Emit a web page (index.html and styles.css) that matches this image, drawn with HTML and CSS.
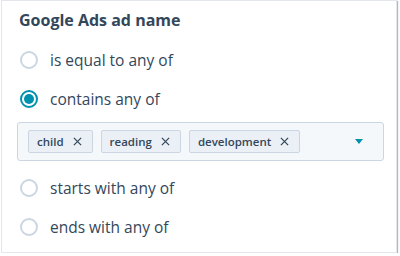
FILE: index.html
```html
<!DOCTYPE html>
<html lang="en">
<head>
  <meta charset="UTF-8" />
  <title>Google Ads ad name</title>
  <link rel="stylesheet" href="styles.css">
</head>
<body>
  <div class="card">
    <h2 class="title">Google Ads ad name</h2>

    <label class="option">
      <span class="radio"></span>
      <span class="label">is equal to any of</span>
    </label>

    <label class="option">
      <span class="radio checked"></span>
      <span class="label">contains any of</span>
    </label>

    <!-- 선택된 값 태그 -->
    <div class="tag-input">
      <div class="tags">
        <span class="tag">child <svg class="tag-x" viewBox="0 0 10 10"><path d="M1 1L9 9M9 1L1 9"/></svg></span>
        <span class="tag">reading <svg class="tag-x" viewBox="0 0 10 10"><path d="M1 1L9 9M9 1L1 9"/></svg></span>
        <span class="tag">development <svg class="tag-x" viewBox="0 0 10 10"><path d="M1 1L9 9M9 1L1 9"/></svg></span>
      </div>
      <span class="caret"></span>
    </div>

    <label class="option">
      <span class="radio"></span>
      <span class="label">starts with any of</span>
    </label>

    <label class="option">
      <span class="radio"></span>
      <span class="label">ends with any of</span>
    </label>
  </div>
</body>
</html>
```

FILE: styles.css
```css
body {
  margin: 0;
  background: #fff;
  font-family: "Open Sans", Lato, sans-serif;
  color: #33475b;
}

.card {
  margin-left: 1px;
  width: 396px;
  height: 253px;
  box-sizing: border-box;
  border: 1px solid #e3e6ea;
  box-shadow: 1px 1px 1px #b8b8b8;
  padding: 7px 12px 0 15px;
}

.title {
  margin: 0 0 8px;
  font-size: 16px;
  font-weight: 700;
  line-height: 24px;
  padding-left: 2px;
}

.option {
  display: flex;
  align-items: center;
  height: 39px;
  padding-left: 3px;
  gap: 12px;
  font-size: 15.5px;
}

.radio {
  width: 18px;
  height: 18px;
  box-sizing: border-box;
  border: 2px solid #cbd6e2;
  border-radius: 50%;
  background: #fff;
  position: relative;
}

.radio.checked {
  border: 2px solid #0091ae;
}

.radio.checked::after {
  content: "";
  position: absolute;
  left: 2px;
  top: 2px;
  width: 10px;
  height: 10px;
  border-radius: 50%;
  background: #0091ae;
}

.tag-input {
  margin: 4px 0 7px;
  height: 39px;
  box-sizing: border-box;
  border: 1px solid #cbd6e2;
  border-radius: 3px;
  background: #f5f8fa;
  display: flex;
  align-items: center;
  justify-content: space-between;
  padding: 0 20px 0 10px;
}

.tags {
  display: flex;
  gap: 8px;
}

.tag {
  display: flex;
  align-items: center;
  height: 23px;
  box-sizing: border-box;
  border: 1px solid #cbd6e2;
  background: #eaf0f6;
  border-radius: 2px;
  padding: 0 10px 0 8px;
  font-size: 11.5px;
  font-weight: 600;
  gap: 9px;
}

.tag-x {
  width: 9px;
  height: 9px;
  stroke: #33475b;
  stroke-width: 1.4;
  fill: none;
}

.caret {
  width: 0;
  height: 0;
  border-left: 4.5px solid transparent;
  border-right: 4.5px solid transparent;
  border-top: 5px solid #0091ae;
}
```
